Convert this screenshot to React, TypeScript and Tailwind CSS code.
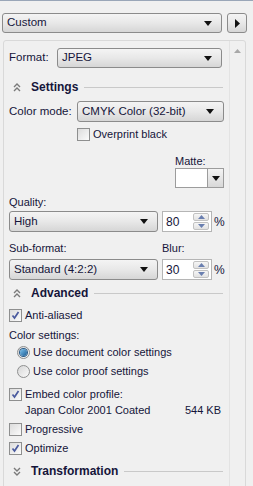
import React from 'react';

const ink = 'text-[#15153a]';

function Arrow() {
  return (
    <svg width="8" height="5" viewBox="0 0 8 5" className="shrink-0">
      <path d="M0 0h8L4 5z" fill="#111" />
    </svg>
  );
}

function Select({ value, className = '' }: { value: string; className?: string }) {
  return (
    <div
      className={`flex shrink-0 items-center justify-between rounded-[3px] border border-[#8b8b8b] bg-gradient-to-b from-[#f4f4f4] via-[#e8e8e8] to-[#d6d6d6] pl-[4px] pr-[9px] ${className}`}
    >
      <span className="whitespace-nowrap text-[11.5px] leading-none">{value}</span>
      <Arrow />
    </div>
  );
}

function Checkbox({ checked }: { checked?: boolean }) {
  return (
    <span className="flex h-[13px] w-[13px] shrink-0 items-center justify-center border border-[#8e8f8f] bg-gradient-to-br from-[#dcdcdc] to-[#fbfbfb]">
      {checked && (
        <svg width="9" height="9" viewBox="0 0 9 9">
          <path d="M1.5 4.5l2 2.5L7.5 1" fill="none" stroke="#4a5a9e" strokeWidth="1.7" />
        </svg>
      )}
    </span>
  );
}

function Radio({ checked }: { checked?: boolean }) {
  return (
    <span className="flex h-[13px] w-[13px] shrink-0 items-center justify-center rounded-full border border-[#8e8f8f] bg-gradient-to-br from-[#d6d6d6] to-[#fafafa]">
      {checked && (
        <span className="h-[7px] w-[7px] rounded-full bg-gradient-to-br from-[#7fc4ee] to-[#1a5e96] ring-1 ring-[#2a5a86]" />
      )}
    </span>
  );
}

function Spin({ value }: { value: string }) {
  return (
    <div className="flex shrink-0 items-center">
      <div className="flex h-[21px] w-[50px] items-center justify-between border border-[#b5b5b5] bg-white pl-[3px] pr-[2px]">
        <span className="text-[12px] leading-none">{value}</span>
        <div className="flex h-[17px] w-[16px] flex-col gap-px">
          <span className="flex flex-1 items-center justify-center rounded-[2px] border border-[#c2c2c2] bg-gradient-to-b from-[#f6f6f6] to-[#e2e2e2]">
            <svg width="7" height="4" viewBox="0 0 7 4"><path d="M0 4h7L3.5 0z" fill="#6a7fb0" /></svg>
          </span>
          <span className="flex flex-1 items-center justify-center rounded-[2px] border border-[#c2c2c2] bg-gradient-to-b from-[#f6f6f6] to-[#e2e2e2]">
            <svg width="7" height="4" viewBox="0 0 7 4"><path d="M0 0h7L3.5 4z" fill="#6a7fb0" /></svg>
          </span>
        </div>
      </div>
      <span className="ml-[2px] text-[12px]">%</span>
    </div>
  );
}

function Section({ title, open = true, className = '' }: { title: string; open?: boolean; className?: string }) {
  return (
    <div className={`flex h-[16px] items-center ${className}`}>
      <svg width="8" height="9" viewBox="0 0 8 9" className="ml-[4px] mr-[10px] shrink-0">
        {open ? (
          <path d="M1 4l3-3 3 3M1 8l3-3 3 3" fill="none" stroke="#7a7a7a" strokeWidth="1.4" />
        ) : (
          <path d="M1 1l3 3 3-3M1 5l3 3 3-3" fill="none" stroke="#7a7a7a" strokeWidth="1.4" />
        )}
      </svg>
      <span className="text-[12px] font-bold leading-none">{title}</span>
      <span className="ml-[6px] mr-[6px] h-px flex-1 bg-[#c9c9c9]" />
    </div>
  );
}

function CheckRow({ label, checked, className = '' }: { label: string; checked?: boolean; className?: string }) {
  return (
    <div className={`flex h-[14px] items-center gap-[3px] ${className}`}>
      <Checkbox checked={checked} />
      <span className="whitespace-nowrap leading-none">{label}</span>
    </div>
  );
}

export default function App() {
  return (
    <div
      className={`h-[486px] w-[253px] overflow-hidden border-t border-[#9aa6b8] bg-[#f0f0f0] text-[11px] ${ink}`}
      style={{ fontFamily: '"Liberation Sans", Arial, sans-serif' }}
    >
      <div className="ml-[2px] mt-[12px] flex h-[20px] gap-[5px]">
        <Select value="Custom" className="w-[220px] pl-[4px]" />
        <div className="flex w-[20px] items-center justify-center rounded-[3px] border border-[#8b8b8b] bg-gradient-to-b from-[#f4f4f4] via-[#e8e8e8] to-[#d6d6d6]">
          <svg width="5" height="9" viewBox="0 0 5 9"><path d="M0 0l5 4.5L0 9z" fill="#111" /></svg>
        </div>
      </div>

      <div className="ml-[3px] mt-[7px] flex h-[460px] w-[243px] rounded-tl-[3px] rounded-tr-[3px] border border-[#d9d9d9]">
        <div className="flex w-[225px] flex-col pl-[5px] pt-[7px]">
          <div className="flex h-[20px] items-center">
            <span className="w-[48px] shrink-0 text-[11.5px] leading-none">Format:</span>
            <Select value="JPEG" className="h-[20px] w-[165px]" />
          </div>

          <Section title="Settings" className="mt-[11px]" />

          <div className="mt-[6px] flex h-[21px] items-center">
            <span className="w-[68px] shrink-0 whitespace-nowrap text-[11.5px] leading-none">Color mode:</span>
            <Select value="CMYK Color (32-bit)" className="h-[21px] w-[147px]" />
          </div>

          <div className="ml-[68px] mt-[5px]">
            <CheckRow label="Overprint black" className="h-[13px]" />
          </div>

          <div className="ml-[166px] mt-[13px] flex h-[14px] items-center leading-none">Matte:</div>
          <div className="ml-[166px] flex h-[20px] w-[49px] border border-[#9c9c9c]">
            <span className="flex-1 bg-white" />
            <span className="flex w-[16px] items-center justify-center border-l border-[#9c9c9c] bg-gradient-to-b from-[#f4f4f4] to-[#d8d8d8]">
              <Arrow />
            </span>
          </div>

          <div className="mt-[7px] flex h-[14px] items-center leading-none">Quality:</div>
          <div className="mt-[2px] flex h-[21px] items-center gap-[4px]">
            <Select value="High" className="h-[21px] w-[149px]" />
            <Spin value="80" />
          </div>

          <div className="mt-[9px] flex h-[14px] items-center leading-none">
            <span className="w-[153px] shrink-0">Sub-format:</span>
            <span>Blur:</span>
          </div>
          <div className="mt-[4px] flex h-[21px] items-center gap-[4px]">
            <Select value="Standard (4:2:2)" className="h-[21px] w-[149px]" />
            <Spin value="30" />
          </div>

          <Section title="Advanced" className="mt-[5px]" />

          <CheckRow label="Anti-aliased" checked className="mt-[7px]" />

          <div className="mt-[6px] flex h-[14px] items-center leading-none">Color settings:</div>

          <div className="ml-[8px] mt-[3px] flex h-[14px] items-center gap-[3px]">
            <Radio checked />
            <span className="whitespace-nowrap leading-none">Use document color settings</span>
          </div>
          <div className="ml-[8px] mt-[5px] flex h-[14px] items-center gap-[3px]">
            <Radio />
            <span className="whitespace-nowrap leading-none">Use color proof settings</span>
          </div>

          <CheckRow label="Embed color profile:" checked className="mt-[9px]" />
          <div className="mt-[2px] flex h-[14px] w-[212px] items-center justify-between pl-[16px] leading-none">
            <span>Japan Color 2001 Coated</span>
            <span>544 KB</span>
          </div>

          <CheckRow label="Progressive" className="mt-[5px]" />
          <CheckRow label="Optimize" checked className="mt-[5px]" />

          <Section title="Transformation" open={false} className="mt-[8px]" />
        </div>

        <div className="flex w-[16px] justify-center border-l border-[#e3e3e3] pt-[8px]">
          <svg width="7" height="4" viewBox="0 0 7 4"><path d="M0 4h7L3.5 0z" fill="#a8a8a8" /></svg>
        </div>
      </div>
    </div>
  );
}
